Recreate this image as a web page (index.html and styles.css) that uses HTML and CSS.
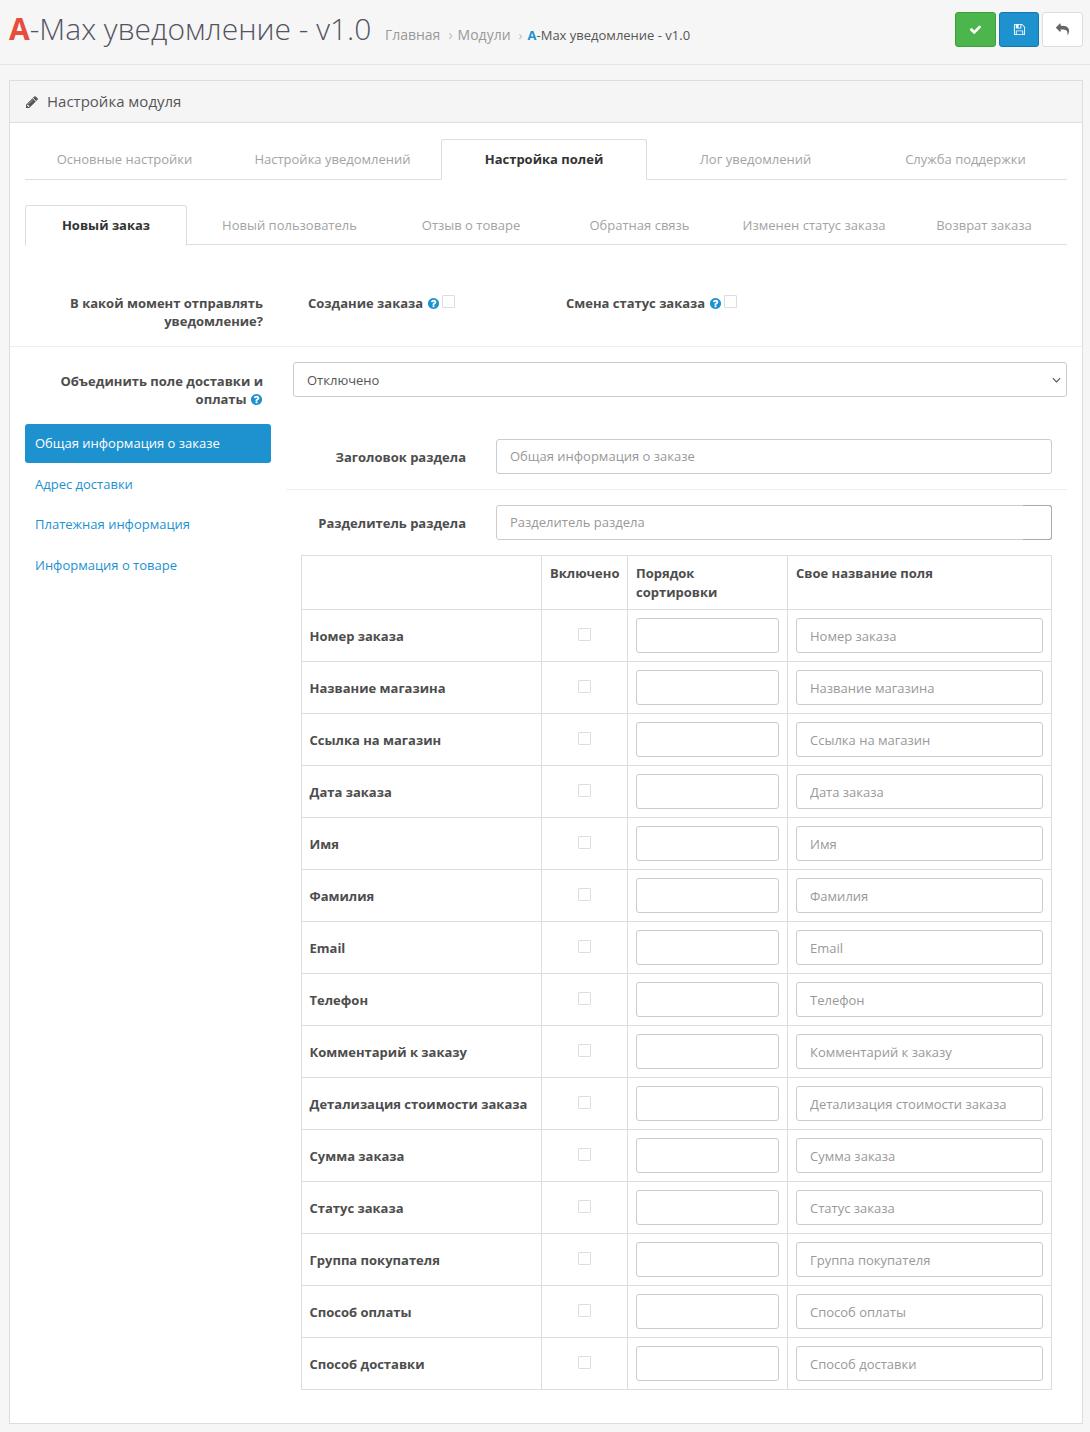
FILE: index.html
```html
<!DOCTYPE html>
<html lang="ru">
<head>
<meta charset="utf-8">
<title>A-Max уведомление - v1.0</title>
<link rel="stylesheet" href="styles.css">
</head>
<body>
<svg class="defs" width="0" height="0" aria-hidden="true">
  <symbol id="i-check" viewBox="0 0 1792 1792"><path d="M1671 566q0 40-28 68l-724 724-136 136q-28 28-68 28t-68-28l-136-136-362-362q-28-28-28-68t28-68l136-136q28-28 68-28t68 28l294 295 656-657q28-28 68-28t68 28l136 136q28 28 28 68z"/></symbol>
  <symbol id="i-save" viewBox="0 0 1792 1792"><path d="M512 1536h768v-384h-768v384zm896 0h128v-896q0-14-10-38.500t-20-34.500l-281-281q-10-10-34-20t-39-10v416q0 40-28 68t-68 28h-576q-40 0-68-28t-28-68v-416h-128v1280h128v-416q0-40 28-68t68-28h832q40 0 68 28t28 68v416zm-384-928v-320q0-13-9.500-22.500t-22.500-9.500h-192q-13 0-22.500 9.500t-9.500 22.500v320q0 13 9.500 22.500t22.500 9.500h192q13 0 22.500-9.500t9.500-22.500zm640 32v928q0 40-28 68t-68 28h-1344q-40 0-68-28t-28-68v-1344q0-40 28-68t68-28h928q40 0 88 20t76 48l280 280q28 28 48 76t20 88z"/></symbol>
  <symbol id="i-reply" viewBox="0 0 1792 1792"><path d="M1792 1120q0 166-127 451-3 7-10.500 24t-13.500 30-13 22q-12 17-28 17-15 0-23.500-10t-8.500-25q0-9 2.500-26.500t2.500-23.500q5-68 5-123 0-101-17.500-181t-48.500-138.500-80-101-105.500-69.500-133-42.500-154-21.500-175.500-6h-224v256q0 26-19 45t-45 19-45-19l-512-512q-19-19-19-45t19-45l512-512q19-19 45-19t45 19 19 45v256h224q713 0 875 403 53 134 53 333z"/></symbol>
  <symbol id="i-pencil" viewBox="0 0 1792 1792"><path d="M491 1536l91-91-235-235-91 91v107h128v128h107zm523-928q0-22-22-22-10 0-17 7l-542 542q-7 7-7 17 0 22 22 22 10 0 17-7l542-542q7-7 7-17zm-54-192l416 416-832 832h-416v-416zm683 96q0 53-37 90l-166 166-416-416 166-165q36-38 90-38 53 0 91 38l235 234q37 39 37 91z"/></symbol>
  <symbol id="i-help" viewBox="0 0 1792 1792"><path d="M1024 1376v-192q0-14-9-23t-23-9h-192q-14 0-23 9t-9 23v192q0 14 9 23t23 9h192q14 0 23-9t9-23zm256-672q0-88-55.500-163t-138.500-116-170-41q-243 0-371 213-15 24 8 42l132 100q7 6 19 6 16 0 25-12 53-68 86-92 34-24 86-24 48 0 85.500 26t37.500 59q0 38-20 61t-68 45q-63 28-115.500 86.500t-52.500 125.500v36q0 14 9 23t23 9h192q14 0 23-9t9-23q0-19 21.500-49.500t54.500-49.500q32-18 49-28.500t46-35 44.500-48 28-60.500 12.500-81zm384 192q0 209-103 385.500t-279.500 279.500-385.500 103-385.500-103-279.500-279.500-103-385.500 103-385.500 279.500-279.500 385.500-103 385.500 103 279.500 279.500 103 385.500z"/></symbol>
</svg>

<header class="page-header">
  <div class="title-wrap">
    <h1 class="page-title"><b class="logo-a">A</b>-Max уведомление - v1.0</h1>
    <ul class="crumbs">
      <li class="crumb">Главная</li>
      <li class="crumb">Модули</li>
      <li class="crumb crumb-current"><b class="logo-a-small">A</b>-Max уведомление - v1.0</li>
    </ul>
  </div>
  <div class="actions">
    <button class="btn btn-green" type="button"><svg class="btn-icon"><use href="#i-check"/></svg></button>
    <button class="btn btn-blue" type="button"><svg class="btn-icon"><use href="#i-save"/></svg></button>
    <button class="btn btn-white" type="button"><svg class="btn-icon"><use href="#i-reply"/></svg></button>
  </div>
</header>

<main class="panel">
  <div class="panel-heading"><svg class="pencil"><use href="#i-pencil"/></svg>Настройка модуля</div>
  <div class="panel-body">
    <ul class="tabs tabs-main">
      <li class="tab">Основные настройки</li>
      <li class="tab">Настройка уведомлений</li>
      <li class="tab active">Настройка полей</li>
      <li class="tab">Лог уведомлений</li>
      <li class="tab">Служба поддержки</li>
    </ul>
    <ul class="tabs tabs-sub">
      <li class="tab active">Новый заказ</li>
      <li class="tab">Новый пользователь</li>
      <li class="tab">Отзыв о товаре</li>
      <li class="tab">Обратная связь</li>
      <li class="tab">Изменен статус заказа</li>
      <li class="tab">Возврат заказа</li>
    </ul>

    <div class="form-row moment-row">
      <div class="row-label">В какой момент отправлять уведомление?</div>
      <div class="moment-options">
        <label class="moment-opt">Создание заказа<svg class="help"><use href="#i-help"/></svg><input class="check" type="checkbox"></label>
        <label class="moment-opt">Смена статус заказа<svg class="help"><use href="#i-help"/></svg><input class="check" type="checkbox"></label>
      </div>
    </div>

    <div class="form-row merge-row">
      <div class="row-label row-label-pad">Объединить поле доставки и оплаты <svg class="help"><use href="#i-help"/></svg></div>
      <div class="select">Отключено<svg class="chev" viewBox="0 0 10 6"><path d="M1 1l4 4 4-4" fill="none" stroke="#555" stroke-width="1.300"/></svg></div>
    </div>

    <div class="fields-layout">
      <ul class="pills">
        <li class="pill active">Общая информация о заказе</li>
        <li class="pill">Адрес доставки</li>
        <li class="pill">Платежная информация</li>
        <li class="pill">Информация о товаре</li>
      </ul>
      <section class="fields">
        <div class="field-row field-row-line">
          <div class="field-label">Заголовок раздела</div>
          <input class="input input-top" type="text" placeholder="Общая информация о заказе">
        </div>
        <div class="field-row">
          <div class="field-label">Разделитель раздела</div>
          <div class="input-wrap">
            <input class="input input-top" type="text" placeholder="Разделитель раздела">
          </div>
        </div>
        <table class="grid">
          <thead>
            <tr><th class="c-name"></th><th class="c-on">Включено</th><th class="c-sort">Порядок сортировки</th><th class="c-title">Свое название поля</th></tr>
          </thead>
          <tbody>
            <tr><th>Номер заказа</th><td class="cell-check"><input class="check" type="checkbox"></td><td><input class="input" type="text"></td><td><input class="input" type="text" placeholder="Номер заказа"></td></tr>
            <tr><th>Название магазина</th><td class="cell-check"><input class="check" type="checkbox"></td><td><input class="input" type="text"></td><td><input class="input" type="text" placeholder="Название магазина"></td></tr>
            <tr><th>Ссылка на магазин</th><td class="cell-check"><input class="check" type="checkbox"></td><td><input class="input" type="text"></td><td><input class="input" type="text" placeholder="Ссылка на магазин"></td></tr>
            <tr><th>Дата заказа</th><td class="cell-check"><input class="check" type="checkbox"></td><td><input class="input" type="text"></td><td><input class="input" type="text" placeholder="Дата заказа"></td></tr>
            <tr><th>Имя</th><td class="cell-check"><input class="check" type="checkbox"></td><td><input class="input" type="text"></td><td><input class="input" type="text" placeholder="Имя"></td></tr>
            <tr><th>Фамилия</th><td class="cell-check"><input class="check" type="checkbox"></td><td><input class="input" type="text"></td><td><input class="input" type="text" placeholder="Фамилия"></td></tr>
            <tr><th>Email</th><td class="cell-check"><input class="check" type="checkbox"></td><td><input class="input" type="text"></td><td><input class="input" type="text" placeholder="Email"></td></tr>
            <tr><th>Телефон</th><td class="cell-check"><input class="check" type="checkbox"></td><td><input class="input" type="text"></td><td><input class="input" type="text" placeholder="Телефон"></td></tr>
            <tr><th>Комментарий к заказу</th><td class="cell-check"><input class="check" type="checkbox"></td><td><input class="input" type="text"></td><td><input class="input" type="text" placeholder="Комментарий к заказу"></td></tr>
            <tr><th>Детализация стоимости заказа</th><td class="cell-check"><input class="check" type="checkbox"></td><td><input class="input" type="text"></td><td><input class="input" type="text" placeholder="Детализация стоимости заказа"></td></tr>
            <tr><th>Сумма заказа</th><td class="cell-check"><input class="check" type="checkbox"></td><td><input class="input" type="text"></td><td><input class="input" type="text" placeholder="Сумма заказа"></td></tr>
            <tr><th>Статус заказа</th><td class="cell-check"><input class="check" type="checkbox"></td><td><input class="input" type="text"></td><td><input class="input" type="text" placeholder="Статус заказа"></td></tr>
            <tr><th>Группа покупателя</th><td class="cell-check"><input class="check" type="checkbox"></td><td><input class="input" type="text"></td><td><input class="input" type="text" placeholder="Группа покупателя"></td></tr>
            <tr><th>Способ оплаты</th><td class="cell-check"><input class="check" type="checkbox"></td><td><input class="input" type="text"></td><td><input class="input" type="text" placeholder="Способ оплаты"></td></tr>
            <tr><th>Способ доставки</th><td class="cell-check"><input class="check" type="checkbox"></td><td><input class="input" type="text"></td><td><input class="input" type="text" placeholder="Способ доставки"></td></tr>
          </tbody>
        </table>
      </section>
    </div>
  </div>
</main>
</body>
</html>
```

FILE: styles.css
```css
* { box-sizing: border-box; }
html, body { margin: 0; padding: 0; }
body {
  background: #f6f6f6;
  color: #555;
  font-family: "Open Sans", sans-serif;
  font-size: 13px;
  line-height: 18.57px;
}
ul { list-style: none; margin: 0; padding: 0; }
.defs { position: absolute; }

.page-header {
  height: 65px;
  border-bottom: 1px solid #e6e6e6;
  padding: 12px 7px 0 9px;
  display: flex;
  justify-content: space-between;
  align-items: flex-start;
}
.title-wrap { display: flex; align-items: baseline; margin-top: -1px; }
.page-title { margin: 0; font-size: 30px; font-weight: 300; line-height: 36px; color: #545460; }
.logo-a { color: #e74c3c; font-weight: 700; }
.crumbs { display: flex; margin-left: 13.5px; }
.crumb { color: #999; font-size: 14px; }
.crumb + .crumb::before { content: "›"; color: #bbb; margin: 0 5px 0 8px; }
.crumb-current { color: #555; font-size: 13px; }
.logo-a-small { color: #1e91cf; font-weight: 700; font-size: 13px; }
.actions { display: flex; gap: 3px; }
.btn { width: 41px; height: 35px; border-radius: 3px; padding: 0; border: 1px solid; display: flex; align-items: center; justify-content: center; }
.btn-icon { width: 13px; height: 13px; fill: currentColor; }
.btn-green { background: #4cb64c; border-color: #3f9f3f; color: #fff; }
.btn-blue { width: 40px; background: #1e91cf; border-color: #1978ab; color: #fff; }
.btn-white { background: #fff; border-color: #ddd; color: #666; }

.panel {
  margin: 15px 7px 8px 9px;
  border: 1px solid #ddd;
  background: #fff;
}
.panel-heading {
  height: 42px;
  padding: 0 15px;
  background: #f5f5f5;
  border-bottom: 1px solid #ddd;
  display: flex;
  align-items: center;
  font-size: 15px;
  color: #555;
}
.pencil { width: 14px; height: 14px; fill: #555; margin-right: 8px; }
.panel-body { padding: 16px 15px 33px; }

.tabs { display: grid; border-bottom: 1px solid #ddd; }
.tabs-main { grid-template-columns: 199px 217px 206px 217px 1fr; height: 41px; }
.tabs-sub { grid-template-columns: 162px 205px 158px 179px 170px 1fr; height: 40px; margin-top: 25px; }
.tabs-sub .tab:last-child { padding-left: 2px; }
.tab {
  text-align: center;
  color: #a3a3a3;
  line-height: 38px;
  border: 1px solid transparent;
  border-radius: 3px 3px 0 0;
  height: 100%;
}
.tab.active {
  color: #333;
  font-weight: 700;
  border-color: #ddd;
  border-bottom-color: #fff;
  background: #fff;
  height: calc(100% + 1px);
}

.form-row { display: flex; margin: 0 -15px; padding: 15px; }
.moment-row { margin-top: 35px; padding-top: 14px; border-bottom: 1px solid #eee; height: 67px; }
.merge-row { padding-bottom: 0; height: 77px; }
.row-label { width: 238px; text-align: right; font-weight: 700; flex: none; color: #4d4d4d; line-height: 18px; }
.row-label-pad { padding-top: 10px; }
.moment-options { display: flex; padding-left: 45px; }
.moment-opt { width: 258px; font-weight: 700; color: #4d4d4d; display: flex; align-items: flex-start; line-height: 18px; }
.help { width: 13px; height: 13px; fill: #1e91cf; vertical-align: -2px; }
.moment-opt .help { margin: 3px 0 0 4px; flex: none; }
.check {
  appearance: none;
  width: 13px;
  height: 13px;
  margin: 0;
  border: 1px solid #ddd;
  background: #fff;
  border-radius: 1px;
  vertical-align: 1px;
}
.moment-opt .check { margin: 1px 0 0 2px; flex: none; }
.select {
  flex: 1;
  margin-left: 30px;
  height: 35px;
  border: 1px solid #ccc;
  border-radius: 3px;
  padding: 1px 13px 0;
  display: flex;
  align-items: center;
  justify-content: space-between;
  color: #555;
}
.chev { width: 9px; height: 6px; margin-right: -8px; }

.fields-layout { display: grid; grid-template-columns: 246px 1fr; column-gap: 15px; }
.pills { display: flex; flex-direction: column; gap: 2px; }
.pill { padding: 10px; color: #1e91cf; border-radius: 3px; }
.pill.active { background: #1e91cf; color: #fff; }

.field-row { display: flex; align-items: center; padding: 15px; }
.field-row-line { border-bottom: 1px solid #eee; }
.field-label { width: 165px; flex: none; text-align: right; font-weight: 700; color: #4d4d4d; margin-right: 30px; padding-top: 2px; }
.input {
  display: block;
  width: 100%;
  height: 35px;
  border: 1px solid #ccc;
  border-radius: 3px;
  background: #fff;
  padding: 0 13px;
  font: 13px "Open Sans", sans-serif;
  color: #555;
}
.input::placeholder { color: #999; opacity: 1; }
.input-top { padding-bottom: 2px; }
.input-wrap { position: relative; flex: 1; }
.input-wrap::after {
  content: "";
  position: absolute;
  top: 0;
  right: 0;
  bottom: 0;
  width: 28px;
  border: 1px solid #aaa;
  border-left: 0;
  border-radius: 0 3px 3px 0;
  pointer-events: none;
}

.grid { width: 751px; margin: 0 15px; border-collapse: collapse; table-layout: fixed; }
.grid th, .grid td { border: 1px solid #ddd; padding: 8px; text-align: left; vertical-align: middle; }
.grid th { font-weight: 700; color: #4d4d4d; }
.grid tbody th { padding-top: 10px; padding-left: 7.5px; }
.grid thead th { vertical-align: top; height: 54px; }
.grid tbody tr { height: 52px; }
.c-name { width: 240px; }
.c-on { width: 86px; }
.c-sort { width: 160px; }
.grid td.cell-check { text-align: center; padding-top: 11px; padding-bottom: 8px; }
```
